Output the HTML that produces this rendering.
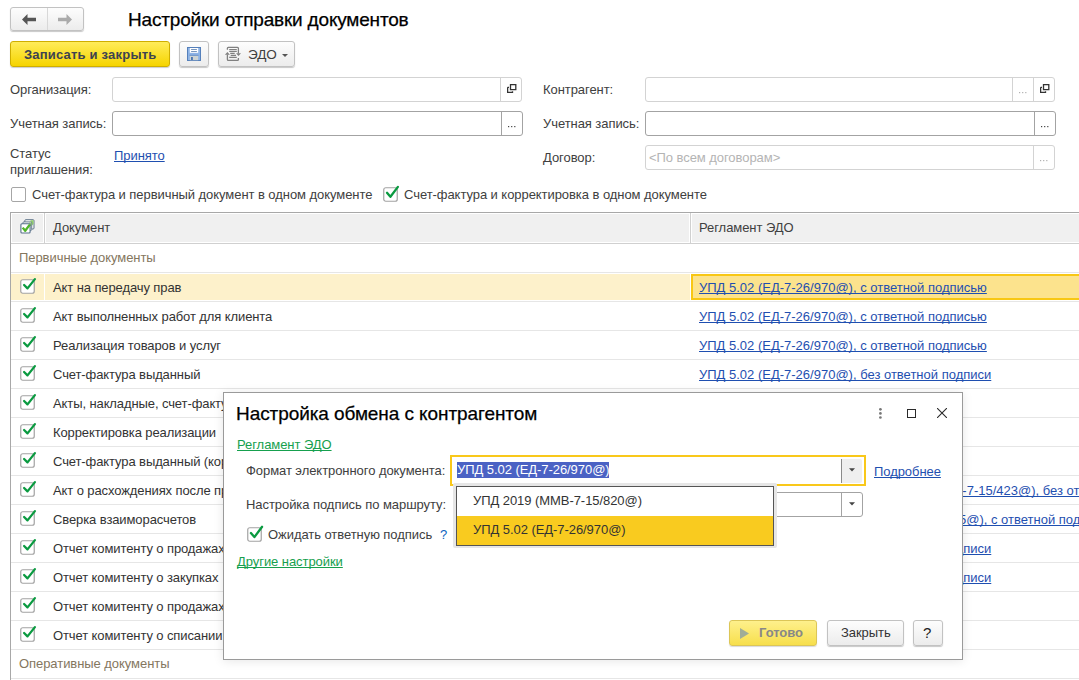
<!DOCTYPE html>
<html><head><meta charset="utf-8">
<style>
*{box-sizing:border-box;text-decoration-skip-ink:none}
html,body{margin:0;padding:0}
body{width:1079px;height:680px;overflow:hidden;background:#fff;position:relative;font-family:"Liberation Sans",sans-serif;font-size:13px;color:#404040}
.a{position:absolute}
.t{position:absolute;white-space:nowrap;line-height:16px;letter-spacing:-0.06px}
.btn{position:absolute;border:1px solid #c2c2c2;border-radius:3px;background:linear-gradient(#fdfdfd,#ececec);box-shadow:0 1px 1px rgba(0,0,0,.22)}
.inp{position:absolute;border:1px solid #d3d3d3;border-radius:3px;background:#fff;height:25px}
.inp.dk{border-color:#a3a3a3}
.dv{position:absolute;top:0;bottom:0;width:1px;background:#d3d3d3}
.dk .dv{background:#a3a3a3}
.dots{position:absolute;font-size:12px;color:#b8b8b8;letter-spacing:0px}
.cb{position:absolute;width:15px;height:15px;border:1px solid #a6a6a6;border-radius:2px;background:#fff}
.hl{position:absolute;left:11px;width:1068px;height:1px;background:#e6e6e6}
.rt{position:absolute;left:53px;white-space:nowrap;color:#333;line-height:16px;letter-spacing:-0.1px}
.lk{position:absolute;left:699px;white-space:nowrap;color:#1f4fb0;text-decoration:underline;line-height:16px}
.ck{position:absolute;left:20px;width:15px;height:15px}
</style></head>
<body>
<!-- nav -->
<div class="btn" style="left:10px;top:7px;width:74px;height:24px"></div>
<div class="a" style="left:47px;top:8px;width:1px;height:22px;background:#d8d8d8"></div>
<svg class="a" style="left:22px;top:14px" width="14" height="11" viewBox="0 0 14 11"><path d="M0 5.5 L5.5 0 V3.8 H14 V7.2 H5.5 V11 Z" fill="#555"/></svg>
<svg class="a" style="left:58px;top:14px" width="14" height="11" viewBox="0 0 14 11"><path d="M14 5.5 L8.5 0 V3.8 H0 V7.2 H8.5 V11 Z" fill="#aaa"/></svg>
<div class="t" style="left:128px;top:8.5px;font-size:19px;letter-spacing:-0.18px;line-height:22px;color:#000;-webkit-text-stroke:0.25px #000">Настройки отправки документов</div>

<!-- toolbar -->
<div class="a" style="left:10px;top:41px;width:160px;height:26px;border:1px solid #cfae00;border-radius:3px;background:linear-gradient(#ffec5a,#f6d400);box-shadow:0 1px 1px rgba(0,0,0,.2)"></div>
<div class="t" style="left:24px;top:47px;font-weight:bold;color:#3d4250;letter-spacing:0.2px">Записать и закрыть</div>
<div class="btn" style="left:179px;top:41px;width:30px;height:26px"></div>
<svg class="a" style="left:187px;top:47px" width="14" height="14" viewBox="0 0 14 14">
<rect x="0.5" y="0.5" width="13" height="13" fill="#8db3e6" stroke="#5580bb"/>
<rect x="2.8" y="1" width="8.4" height="4.8" fill="#fff"/>
<path d="M4.1 2.5 H9.9 M4.1 4.5 H9.9" stroke="#7896be" stroke-width="1"/>
<rect x="2.8" y="8.6" width="8.4" height="4.6" fill="#cdd3d3"/>
<rect x="4.1" y="10" width="1.7" height="3" fill="#3f6cae"/>
<path d="M2.5 8.3 H11.5" stroke="#5f88c0" stroke-width="0.8"/>
</svg>
<div class="btn" style="left:218px;top:41px;width:77px;height:26px"></div>
<svg class="a" style="left:220px;top:42px" width="26" height="22" viewBox="0 0 26 22">
<path d="M7.4 7.8 V6.2 Q7.4 5.3 8.3 5.3 H17.5 Q18.4 5.3 18.4 6.2 V11.5 M7.4 12.4 V17.4 Q7.4 18.3 8.3 18.3 H17.5 Q18.4 18.3 18.4 17.4 V16" stroke="#808080" stroke-width="1.3" fill="none"/>
<path d="M9.2 7.5 H16.8 M9.2 9.4 H16.8 M10.2 11.4 H14.7 M10.7 13.3 H16 M9.2 15.4 H16.8" stroke="#808080" stroke-width="1.2" fill="none"/>
<path d="M4.9 12.7 L7.4 9.9 L9.9 12.7 Z M16 11.2 H21 L18.5 14 Z" fill="#808080"/>
</svg>
<div class="t" style="left:248px;top:47px;color:#404040;font-size:13.5px">ЭДО</div>
<svg class="a" style="left:282px;top:54px" width="6" height="3" viewBox="0 0 6 3"><path d="M0 0 H6 L3 3Z" fill="#555"/></svg>

<!-- form -->
<div class="t" style="left:10px;top:82px">Организация:</div>
<div class="inp" style="left:112px;top:77px;width:410px"><div class="dv" style="left:387px"></div></div>
<svg class="a" style="left:507px;top:84px" width="10" height="10" viewBox="0 0 10 10"><path d="M3.5 0.6 H8.8 V5.6 H3.5 Z M0.6 3.3 V8.4 H5.5 V7.2 M0.6 3.3 H2" stroke="#333" stroke-width="1.3" fill="none"/></svg>

<div class="t" style="left:10px;top:116px">Учетная запись:</div>
<div class="inp dk" style="left:112px;top:111px;width:411px"><div class="dv" style="left:388px"></div></div>
<svg class="a" style="left:508px;top:126px" width="8" height="2" viewBox="0 0 8 2"><rect x="0" y="0" width="1.2" height="1.2" fill="#444"/><rect x="3.1" y="0" width="1.2" height="1.2" fill="#444"/><rect x="6.2" y="0" width="1.2" height="1.2" fill="#444"/></svg>

<div class="t" style="left:10px;top:146px">Статус</div>
<div class="t" style="left:10px;top:162px">приглашения:</div>
<div class="t" style="left:114px;top:148px;color:#1f4fb0;text-decoration:underline">Принято</div>

<div class="t" style="left:543px;top:82px">Контрагент:</div>
<div class="inp" style="left:645px;top:77px;width:410px"><div class="dv" style="left:366px"></div><div class="dv" style="left:387px"></div></div>
<svg class="a" style="left:1019px;top:92px" width="8" height="2" viewBox="0 0 8 2"><rect x="0" y="0" width="1.2" height="1.2" fill="#b0b0b0"/><rect x="3.1" y="0" width="1.2" height="1.2" fill="#b0b0b0"/><rect x="6.2" y="0" width="1.2" height="1.2" fill="#b0b0b0"/></svg>
<svg class="a" style="left:1040px;top:84px" width="10" height="10" viewBox="0 0 10 10"><path d="M3.5 0.6 H8.8 V5.6 H3.5 Z M0.6 3.3 V8.4 H5.5 V7.2 M0.6 3.3 H2" stroke="#333" stroke-width="1.3" fill="none"/></svg>

<div class="t" style="left:543px;top:116px">Учетная запись:</div>
<div class="inp dk" style="left:645px;top:111px;width:411px"><div class="dv" style="left:388px"></div></div>
<svg class="a" style="left:1041px;top:126px" width="8" height="2" viewBox="0 0 8 2"><rect x="0" y="0" width="1.2" height="1.2" fill="#444"/><rect x="3.1" y="0" width="1.2" height="1.2" fill="#444"/><rect x="6.2" y="0" width="1.2" height="1.2" fill="#444"/></svg>

<div class="t" style="left:543px;top:150px">Договор:</div>
<div class="inp" style="left:645px;top:145px;width:410px"><div class="dv" style="left:387px"></div></div>
<div class="t" style="left:649px;top:150px;color:#b4b4b4">&lt;По всем договорам&gt;</div>
<svg class="a" style="left:1040px;top:160px" width="8" height="2" viewBox="0 0 8 2"><rect x="0" y="0" width="1.2" height="1.2" fill="#b0b0b0"/><rect x="3.1" y="0" width="1.2" height="1.2" fill="#b0b0b0"/><rect x="6.2" y="0" width="1.2" height="1.2" fill="#b0b0b0"/></svg>

<div class="cb" style="left:11px;top:187px"></div>
<div class="t" style="left:32px;top:187px">Счет-фактура и первичный документ в одном документе</div>
<svg class="a" style="left:383px;top:185px" width="18" height="18" viewBox="0 0 18 18"><rect x="0.75" y="2.75" width="13.5" height="13.5" rx="2" fill="#fff" stroke="#a3a3a3" stroke-width="1.2"/><path d="M4 7.8 L7.4 11.8 L14.9 1.9" stroke="#0a9a40" stroke-width="2.3" fill="none" stroke-linecap="round" stroke-linejoin="round"/></svg>
<div class="t" style="left:404px;top:187px">Счет-фактура и корректировка в одном документе</div>

<!-- table -->
<div class="a" style="left:10px;top:212px;width:1069px;height:468px;border-left:1px solid #a8a8a8;border-top:1px solid #a8a8a8"></div>
<div class="a" style="left:12px;top:214px;width:31px;height:28px;background:#f0f0f0"></div>
<div class="a" style="left:46px;top:214px;width:643px;height:28px;background:#f0f0f0"></div>
<div class="a" style="left:692px;top:214px;width:387px;height:28px;background:#f0f0f0"></div>
<div class="a" style="left:11px;top:243px;width:1068px;height:1px;background:#d0d0d0"></div>
<div class="a" style="left:44px;top:213px;width:1px;height:30px;background:#d0d0d0"></div>
<div class="a" style="left:690px;top:213px;width:1px;height:30px;background:#d0d0d0"></div>
<svg class="a" style="left:20px;top:219px" width="16" height="16" viewBox="0 0 16 16">
<rect x="4.8" y="0.7" width="9.2" height="9.3" rx="1" fill="#fafafa" stroke="#5f7489" stroke-width="1"/>
<path d="M10.5 1.2 H13.5 V5 L11 7.5 Z" fill="#8fcf6a"/>
<rect x="2.9" y="2.9" width="8.8" height="8.6" rx="1" fill="#fafafa" stroke="#6a7e92" stroke-width="1"/>
<path d="M9 3.4 H11.2 V6 L9.5 8 Z" fill="#8fcf6a"/>
<rect x="0.9" y="4.8" width="9.2" height="9.2" rx="1" fill="#fff" stroke="#56708a" stroke-width="1.1"/>
<path d="M2.7 8.6 L5.2 11.8 L9.8 5.6" stroke="#4fb52a" stroke-width="2.3" fill="none" stroke-linejoin="round"/>
</svg>
<div class="t" style="left:53px;top:220px">Документ</div>
<div class="t" style="left:699px;top:220px">Регламент ЭДО</div>

<div class="t" style="left:19px;top:250px;color:#84765e">Первичные документы</div>
<div class="hl" style="top:272px"></div>
<!-- selected row -->
<div class="a" style="left:11px;top:274px;width:33px;height:26px;background:#fdf1cb"></div>
<div class="a" style="left:45px;top:274px;width:645px;height:26px;background:#fdf1cb"></div>
<div class="a" style="left:691px;top:274px;width:400px;height:26px;border:2px solid #f8c714;background:#fce38d"></div>

<!--ROWS-->
<div class="hl" style="top:301px"></div>
<svg class="ck" style="top:279px" width="15" height="15" viewBox="0 0 15 15"><rect x="0.75" y="0.75" width="13.5" height="13.5" rx="2" fill="#fff" stroke="#a3a3a3" stroke-width="1.2"/></svg><svg class="a" style="left:20px;top:275px" width="18" height="18" viewBox="0 0 18 18"><path d="M4.1 10 L7.5 13.4 L14.9 4.1" stroke="#0a9a40" stroke-width="2.3" fill="none" stroke-linecap="round" stroke-linejoin="round"/></svg>
<div class="rt" style="top:280px">Акт на передачу прав</div>
<div class="lk" style="top:280px">УПД 5.02 (ЕД-7-26/970@), с ответной подписью</div>
<div class="hl" style="top:330px"></div>
<svg class="ck" style="top:308px" width="15" height="15" viewBox="0 0 15 15"><rect x="0.75" y="0.75" width="13.5" height="13.5" rx="2" fill="#fff" stroke="#a3a3a3" stroke-width="1.2"/></svg><svg class="a" style="left:20px;top:304px" width="18" height="18" viewBox="0 0 18 18"><path d="M4.1 10 L7.5 13.4 L14.9 4.1" stroke="#0a9a40" stroke-width="2.3" fill="none" stroke-linecap="round" stroke-linejoin="round"/></svg>
<div class="rt" style="top:309px">Акт выполненных работ для клиента</div>
<div class="lk" style="top:309px">УПД 5.02 (ЕД-7-26/970@), с ответной подписью</div>
<div class="hl" style="top:359px"></div>
<svg class="ck" style="top:337px" width="15" height="15" viewBox="0 0 15 15"><rect x="0.75" y="0.75" width="13.5" height="13.5" rx="2" fill="#fff" stroke="#a3a3a3" stroke-width="1.2"/></svg><svg class="a" style="left:20px;top:333px" width="18" height="18" viewBox="0 0 18 18"><path d="M4.1 10 L7.5 13.4 L14.9 4.1" stroke="#0a9a40" stroke-width="2.3" fill="none" stroke-linecap="round" stroke-linejoin="round"/></svg>
<div class="rt" style="top:338px">Реализация товаров и услуг</div>
<div class="lk" style="top:338px">УПД 5.02 (ЕД-7-26/970@), с ответной подписью</div>
<div class="hl" style="top:388px"></div>
<svg class="ck" style="top:366px" width="15" height="15" viewBox="0 0 15 15"><rect x="0.75" y="0.75" width="13.5" height="13.5" rx="2" fill="#fff" stroke="#a3a3a3" stroke-width="1.2"/></svg><svg class="a" style="left:20px;top:362px" width="18" height="18" viewBox="0 0 18 18"><path d="M4.1 10 L7.5 13.4 L14.9 4.1" stroke="#0a9a40" stroke-width="2.3" fill="none" stroke-linecap="round" stroke-linejoin="round"/></svg>
<div class="rt" style="top:367px">Счет-фактура выданный</div>
<div class="lk" style="top:367px">УПД 5.02 (ЕД-7-26/970@), без ответной подписи</div>
<div class="hl" style="top:417px"></div>
<svg class="ck" style="top:395px" width="15" height="15" viewBox="0 0 15 15"><rect x="0.75" y="0.75" width="13.5" height="13.5" rx="2" fill="#fff" stroke="#a3a3a3" stroke-width="1.2"/></svg><svg class="a" style="left:20px;top:391px" width="18" height="18" viewBox="0 0 18 18"><path d="M4.1 10 L7.5 13.4 L14.9 4.1" stroke="#0a9a40" stroke-width="2.3" fill="none" stroke-linecap="round" stroke-linejoin="round"/></svg>
<div class="rt" style="top:396px">Акты, накладные, счет-фактуры (информация продавца)</div>
<div class="hl" style="top:446px"></div>
<svg class="ck" style="top:424px" width="15" height="15" viewBox="0 0 15 15"><rect x="0.75" y="0.75" width="13.5" height="13.5" rx="2" fill="#fff" stroke="#a3a3a3" stroke-width="1.2"/></svg><svg class="a" style="left:20px;top:420px" width="18" height="18" viewBox="0 0 18 18"><path d="M4.1 10 L7.5 13.4 L14.9 4.1" stroke="#0a9a40" stroke-width="2.3" fill="none" stroke-linecap="round" stroke-linejoin="round"/></svg>
<div class="rt" style="top:425px">Корректировка реализации</div>
<div class="hl" style="top:475px"></div>
<svg class="ck" style="top:453px" width="15" height="15" viewBox="0 0 15 15"><rect x="0.75" y="0.75" width="13.5" height="13.5" rx="2" fill="#fff" stroke="#a3a3a3" stroke-width="1.2"/></svg><svg class="a" style="left:20px;top:449px" width="18" height="18" viewBox="0 0 18 18"><path d="M4.1 10 L7.5 13.4 L14.9 4.1" stroke="#0a9a40" stroke-width="2.3" fill="none" stroke-linecap="round" stroke-linejoin="round"/></svg>
<div class="rt" style="top:454px">Счет-фактура выданный (корректировочный)</div>
<div class="hl" style="top:504px"></div>
<svg class="ck" style="top:482px" width="15" height="15" viewBox="0 0 15 15"><rect x="0.75" y="0.75" width="13.5" height="13.5" rx="2" fill="#fff" stroke="#a3a3a3" stroke-width="1.2"/></svg><svg class="a" style="left:20px;top:478px" width="18" height="18" viewBox="0 0 18 18"><path d="M4.1 10 L7.5 13.4 L14.9 4.1" stroke="#0a9a40" stroke-width="2.3" fill="none" stroke-linecap="round" stroke-linejoin="round"/></svg>
<div class="rt" style="top:483px">Акт о расхождениях после приемки</div>
<div class="hl" style="top:533px"></div>
<svg class="ck" style="top:511px" width="15" height="15" viewBox="0 0 15 15"><rect x="0.75" y="0.75" width="13.5" height="13.5" rx="2" fill="#fff" stroke="#a3a3a3" stroke-width="1.2"/></svg><svg class="a" style="left:20px;top:507px" width="18" height="18" viewBox="0 0 18 18"><path d="M4.1 10 L7.5 13.4 L14.9 4.1" stroke="#0a9a40" stroke-width="2.3" fill="none" stroke-linecap="round" stroke-linejoin="round"/></svg>
<div class="rt" style="top:512px">Сверка взаиморасчетов</div>
<div class="hl" style="top:562px"></div>
<svg class="ck" style="top:540px" width="15" height="15" viewBox="0 0 15 15"><rect x="0.75" y="0.75" width="13.5" height="13.5" rx="2" fill="#fff" stroke="#a3a3a3" stroke-width="1.2"/></svg><svg class="a" style="left:20px;top:536px" width="18" height="18" viewBox="0 0 18 18"><path d="M4.1 10 L7.5 13.4 L14.9 4.1" stroke="#0a9a40" stroke-width="2.3" fill="none" stroke-linecap="round" stroke-linejoin="round"/></svg>
<div class="rt" style="top:541px">Отчет комитенту о продажах</div>
<div class="lk" style="top:541px">УПД 5.02 (ЕД-7-26/970@), без ответной подписи</div>
<div class="hl" style="top:591px"></div>
<svg class="ck" style="top:569px" width="15" height="15" viewBox="0 0 15 15"><rect x="0.75" y="0.75" width="13.5" height="13.5" rx="2" fill="#fff" stroke="#a3a3a3" stroke-width="1.2"/></svg><svg class="a" style="left:20px;top:565px" width="18" height="18" viewBox="0 0 18 18"><path d="M4.1 10 L7.5 13.4 L14.9 4.1" stroke="#0a9a40" stroke-width="2.3" fill="none" stroke-linecap="round" stroke-linejoin="round"/></svg>
<div class="rt" style="top:570px">Отчет комитенту о закупках</div>
<div class="lk" style="top:570px">УПД 5.02 (ЕД-7-26/970@), без ответной подписи</div>
<div class="hl" style="top:620px"></div>
<svg class="ck" style="top:598px" width="15" height="15" viewBox="0 0 15 15"><rect x="0.75" y="0.75" width="13.5" height="13.5" rx="2" fill="#fff" stroke="#a3a3a3" stroke-width="1.2"/></svg><svg class="a" style="left:20px;top:594px" width="18" height="18" viewBox="0 0 18 18"><path d="M4.1 10 L7.5 13.4 L14.9 4.1" stroke="#0a9a40" stroke-width="2.3" fill="none" stroke-linecap="round" stroke-linejoin="round"/></svg>
<div class="rt" style="top:599px">Отчет комитенту о продажах (с НДС)</div>
<div class="hl" style="top:649px"></div>
<svg class="ck" style="top:627px" width="15" height="15" viewBox="0 0 15 15"><rect x="0.75" y="0.75" width="13.5" height="13.5" rx="2" fill="#fff" stroke="#a3a3a3" stroke-width="1.2"/></svg><svg class="a" style="left:20px;top:623px" width="18" height="18" viewBox="0 0 18 18"><path d="M4.1 10 L7.5 13.4 L14.9 4.1" stroke="#0a9a40" stroke-width="2.3" fill="none" stroke-linecap="round" stroke-linejoin="round"/></svg>
<div class="rt" style="top:628px">Отчет комитенту о списании</div>
<div class="lk" style="left:932px;top:483px">ММВ-7-15/423@), без ответной подписи</div>
<div class="lk" style="left:959px;top:512px">5@), с ответной подписью</div>
<div class="t" style="left:19px;top:656px;color:#84765e">Оперативные документы</div>
<!--/ROWS-->
<div class="hl" style="top:678px"></div>
<!--DIALOG-->
<!-- dialog -->
<div class="a" style="left:223px;top:392px;width:740px;height:268px;border:1px solid #9a9a9a;background:#fff;box-shadow:0 1px 10px rgba(0,0,0,.10)"></div>
<div class="t" style="left:236px;top:402.5px;font-size:19px;letter-spacing:-0.08px;line-height:22px;color:#000;-webkit-text-stroke:0.25px #000">Настройка обмена с контрагентом</div>
<svg class="a" style="left:878px;top:407px" width="5" height="13" viewBox="0 0 5 13"><circle cx="2.4" cy="2.3" r="1.35" fill="#777"/><circle cx="2.4" cy="6.4" r="1.35" fill="#777"/><circle cx="2.4" cy="10.5" r="1.35" fill="#777"/></svg>
<div class="a" style="left:907px;top:409px;width:9px;height:9px;border:1.4px solid #2a2a2a"></div>
<svg class="a" style="left:937px;top:408px" width="10" height="10" viewBox="0 0 10 10"><path d="M0 0 L10 10 M10 0 L0 10" stroke="#2a2a2a" stroke-width="1.1"/></svg>

<div class="t" style="left:237px;top:437px;color:#16a04e;text-decoration:underline">Регламент ЭДО</div>
<div class="t" style="left:246px;top:463px">Формат электронного документа:</div>
<div class="a" style="left:450px;top:455px;width:416px;height:31px;border:2px solid #f9c81a;background:#fff"></div>
<div class="a" style="left:842px;top:459px;width:20px;height:24px;background:#efefef;border-radius:0 2px 2px 0"></div>
<div class="a" style="left:841px;top:459px;width:1px;height:24px;background:#8a8a8a"></div>
<svg class="a" style="left:849px;top:468px" width="6" height="4" viewBox="0 0 6 4"><path d="M0 0.2 H6 L3 3.4Z" fill="#444"/></svg>
<div class="a" style="left:457px;top:462px;width:152px;height:16px;background:#4b62c4"></div>
<div class="t" style="left:457px;top:462px;color:#fff">УПД 5.02 (ЕД-7-26/970@)</div>
<div class="t" style="left:874px;top:463.5px;color:#1f4fb0;text-decoration:underline">Подробнее</div>

<div class="t" style="left:246px;top:497px">Настройка подпись по маршруту:</div>
<div class="a" style="left:458px;top:492px;width:405px;height:25px;border:1px solid #a3a3a3;border-radius:3px;background:#fff"></div>
<div class="a" style="left:841px;top:493px;width:1px;height:23px;background:#a3a3a3"></div>
<svg class="a" style="left:849px;top:502px" width="6" height="4" viewBox="0 0 6 4"><path d="M0 0.2 H6 L3 3.4Z" fill="#444"/></svg>

<svg class="a" style="left:247px;top:522px" width="18" height="20" viewBox="0 0 18 20"><rect x="0.75" y="5.75" width="13.5" height="13.5" rx="2" fill="#fff" stroke="#a3a3a3" stroke-width="1.2"/><path d="M3.9 11 L7.4 15.1 L15.1 4.8" stroke="#0a9a40" stroke-width="2.3" fill="none" stroke-linecap="round" stroke-linejoin="round"/></svg>
<div class="t" style="left:268px;top:527px">Ожидать ответную подпись</div>
<div class="t" style="left:440px;top:527px;color:#0b63c0">?</div>
<div class="t" style="left:237px;top:554px;color:#16a04e;text-decoration:underline">Другие настройки</div>

<!-- dropdown -->
<div class="a" style="left:453px;top:483px;width:324px;height:65px;background:#e6e6e6;border-radius:2px"></div>
<div class="a" style="left:456px;top:486px;width:318px;height:60px;border:1px solid #555;background:#fff"></div>
<div class="a" style="left:457px;top:516px;width:316px;height:29px;background:#f9cb1f"></div>
<div class="t" style="left:473px;top:493px;color:#333">УПД 2019 (ММВ-7-15/820@)</div>
<div class="t" style="left:473px;top:522px;color:#333">УПД 5.02 (ЕД-7-26/970@)</div>

<!-- buttons -->
<div class="a" style="left:729px;top:620px;width:88px;height:26px;border:1px solid #dcc657;border-radius:3px;background:linear-gradient(#fef08c,#f7df4c);box-shadow:0 1px 1px rgba(0,0,0,.15)"></div>
<svg class="a" style="left:740px;top:628px" width="9" height="11" viewBox="0 0 9 11"><path d="M0 0 L9 5.5 L0 11Z" fill="#a0ad98"/></svg>
<div class="t" style="left:759px;top:625px;font-weight:bold;color:#888">Готово</div>
<div class="btn" style="left:827px;top:620px;width:77px;height:26px"></div>
<div class="t" style="left:841px;top:625px;color:#333">Закрыть</div>
<div class="btn" style="left:913px;top:620px;width:30px;height:26px"></div>
<div class="t" style="left:923px;top:624px;color:#222;font-size:15px;line-height:18px">?</div>

<!--/DIALOG-->
</body></html>
